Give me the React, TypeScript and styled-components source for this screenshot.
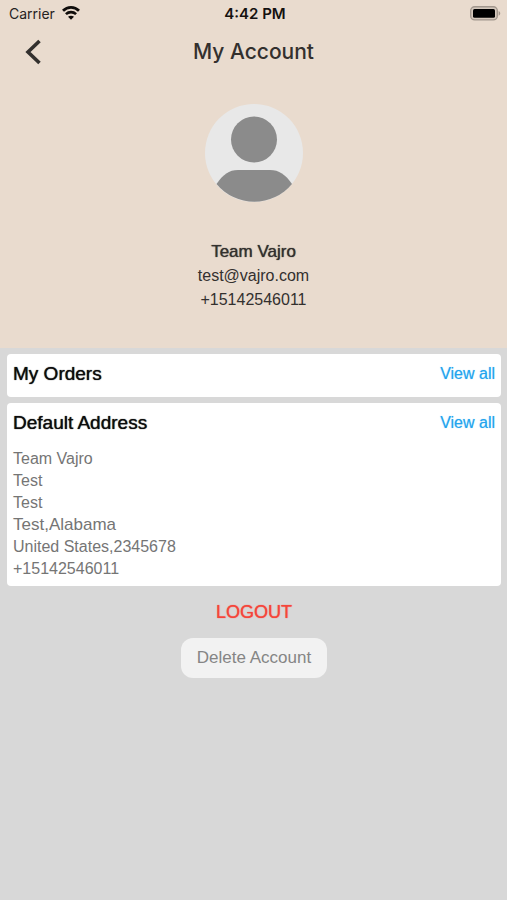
import React from "react";
import styled, { createGlobalStyle, css } from "styled-components";

const GlobalStyle = createGlobalStyle`
  * { box-sizing: border-box; }
  body {
    margin: 0;
    background: #d8d8d8;
    font-family: "Liberation Sans", Arial, sans-serif;
  }
  h1, h2, p { margin: 0; font-weight: 400; }
  button { border: 0; padding: 0; background: none; font-family: inherit; cursor: pointer; }
`;

const medium = css`
  text-shadow: 0 0 1px currentColor;
`;

const Screen = styled.main`
  min-height: 100vh;
  display: flex;
  flex-direction: column;
`;

const Header = styled.header`
  background: #e9dbce;
  color: #33302e;
  padding-bottom: 36px;
`;

const StatusBar = styled.div`
  display: grid;
  grid-template-columns: 1fr auto 1fr;
  align-items: center;
  height: 26px;
  padding: 0 6px 0 9px;
  font-family: Inter, sans-serif;
  font-size: 14px;
  color: #26221f;
`;

const Carrier = styled.div`
  display: flex;
  align-items: center;
  gap: 7px;
`;

const Clock = styled.time`
  font-size: 15px;
  font-weight: 600;
  color: #14110f;
`;

const BatterySlot = styled.div`
  display: flex;
  justify-content: flex-end;
`;

const NavBar = styled.nav`
  display: grid;
  grid-template-columns: 1fr auto 1fr;
  align-items: center;
  height: 52px;
  padding: 0 20px;
`;

const BackButton = styled.button`
  display: flex;
  justify-self: start;
  color: #33302e;
`;

const Title = styled.h1`
  font-family: Inter, sans-serif;
  font-size: 21px;
  font-weight: 500;
  line-height: 28px;
`;

const Profile = styled.section`
  display: flex;
  flex-direction: column;
  align-items: center;
  padding-top: 26px;
  font-size: 16px;
  line-height: 24px;
`;

const Avatar = styled.svg`
  display: block;
  width: 98px;
  height: 98px;
  margin-bottom: 38px;
`;

const ProfileName = styled.h2`
  font-size: 17px;
  line-height: 24px;
  ${medium}
`;

const Content = styled.div`
  display: flex;
  flex-direction: column;
  gap: 6px;
  padding: 6px 6px 6px 7px;
`;

const Card = styled.section`
  padding: 5px 6px;
  border-radius: 4px;
  background: #fff;
`;

const CardHeader = styled.div`
  display: flex;
  justify-content: space-between;
  align-items: center;
  height: 29px;
`;

const CardTitle = styled.h2`
  font-size: 19px;
  line-height: 28px;
  color: #0c0c0c;
  ${medium}
`;

const ViewAll = styled.a`
  font-size: 16px;
  line-height: 28px;
  color: #22a4ee;
  text-decoration: none;
  text-shadow: 0 0 1px #22a4ee88;
`;

const OrdersCard = styled(Card)`
  padding-bottom: 9px;
`;

const Address = styled.address`
  display: flex;
  flex-direction: column;
  padding: 11px 0 1px;
  font-style: normal;
  font-size: 16px;
  color: #757575;
`;

const AddressLine = styled.span<{ $large?: boolean }>`
  font-size: ${(p) => (p.$large ? 17 : 16)}px;
  line-height: 22px;
`;

const Actions = styled.div`
  display: flex;
  flex-direction: column;
  align-items: center;
  gap: 14px;
  padding-top: 8px;
`;

const LogoutButton = styled.button`
  font-size: 18px;
  line-height: 24px;
  color: #f5453b;
  ${medium}
`;

const DeleteButton = styled.button`
  height: 40px;
  padding: 0 16px;
  border-radius: 12px;
  background: #f2f2f2;
  font-size: 17px;
  color: #858585;
`;

const addressLines = [
  { text: "Team Vajro" },
  { text: "Test" },
  { text: "Test" },
  { text: "Test,Alabama", large: true },
  { text: "United States,2345678" },
  { text: "+15142546011" },
];

const WifiIcon = () => (
  <svg width="18" height="14" viewBox="0 0 18 14" fill="none" stroke="#100d0b" aria-hidden="true">
    <path d="M1 4.800C5.500.3 12.500.3 17 4.800" strokeWidth="2.800" />
    <path d="M3.900 8.100c2.900-2.700 7.300-2.700 10.200 0" strokeWidth="2.600" />
    <path d="M9 13.800 6 10.800c1.700-1.500 4.300-1.500 6 0z" fill="#100d0b" stroke="none" />
  </svg>
);

const BatteryIcon = () => (
  <svg width="31" height="15" viewBox="0 0 31 15" aria-hidden="true">
    <rect x="0.700" y="0.700" width="26.600" height="13.200" rx="4" fill="#d5c8bc" stroke="#a2978d" strokeWidth="1.400" />
    <rect x="3" y="3" width="22" height="8.800" rx="1.500" fill="#000" />
    <path d="M28.600 5c2.200 1 2.200 3.800 0 4.800z" fill="#a2978d" />
  </svg>
);

export default function App() {
  return (
    <Screen>
      <GlobalStyle />
      <Header>
        <StatusBar>
          <Carrier>
            Carrier
            <WifiIcon />
          </Carrier>
          <Clock>4:42 PM</Clock>
          <BatterySlot>
            <BatteryIcon />
          </BatterySlot>
        </StatusBar>
        <NavBar>
          <BackButton type="button" aria-label="Back">
            <svg width="26" height="28" viewBox="0 0 26 28" fill="none" stroke="currentColor" strokeWidth="3.600">
              <path d="M19.500 3 8 14l11.500 11" />
            </svg>
          </BackButton>
          <Title>My Account</Title>
        </NavBar>
        <Profile>
          <Avatar viewBox="0 0 98 98" role="img" aria-label="Profile picture">
            <circle cx="49" cy="49" r="49" fill="#e8e8e8" />
            <circle cx="49" cy="35.500" r="23" fill="#8b8b8b" />
            <path d="M11.500 80C18 70.500 24 66 33 66H65C74 66 80.500 70.500 87 80A49 49 0 0 1 11.500 80Z" fill="#8b8b8b" />
          </Avatar>
          <ProfileName>Team Vajro</ProfileName>
          <p>test@vajro.com</p>
          <p>+15142546011</p>
        </Profile>
      </Header>
      <Content>
        <OrdersCard>
          <CardHeader>
            <CardTitle>My Orders</CardTitle>
            <ViewAll href="#orders">View all</ViewAll>
          </CardHeader>
        </OrdersCard>
        <Card>
          <CardHeader>
            <CardTitle>Default Address</CardTitle>
            <ViewAll href="#addresses">View all</ViewAll>
          </CardHeader>
          <Address>
            {addressLines.map((line, i) => (
              <AddressLine key={i} $large={line.large}>
                {line.text}
              </AddressLine>
            ))}
          </Address>
        </Card>
        <Actions>
          <LogoutButton type="button">LOGOUT</LogoutButton>
          <DeleteButton type="button">Delete Account</DeleteButton>
        </Actions>
      </Content>
    </Screen>
  );
}
